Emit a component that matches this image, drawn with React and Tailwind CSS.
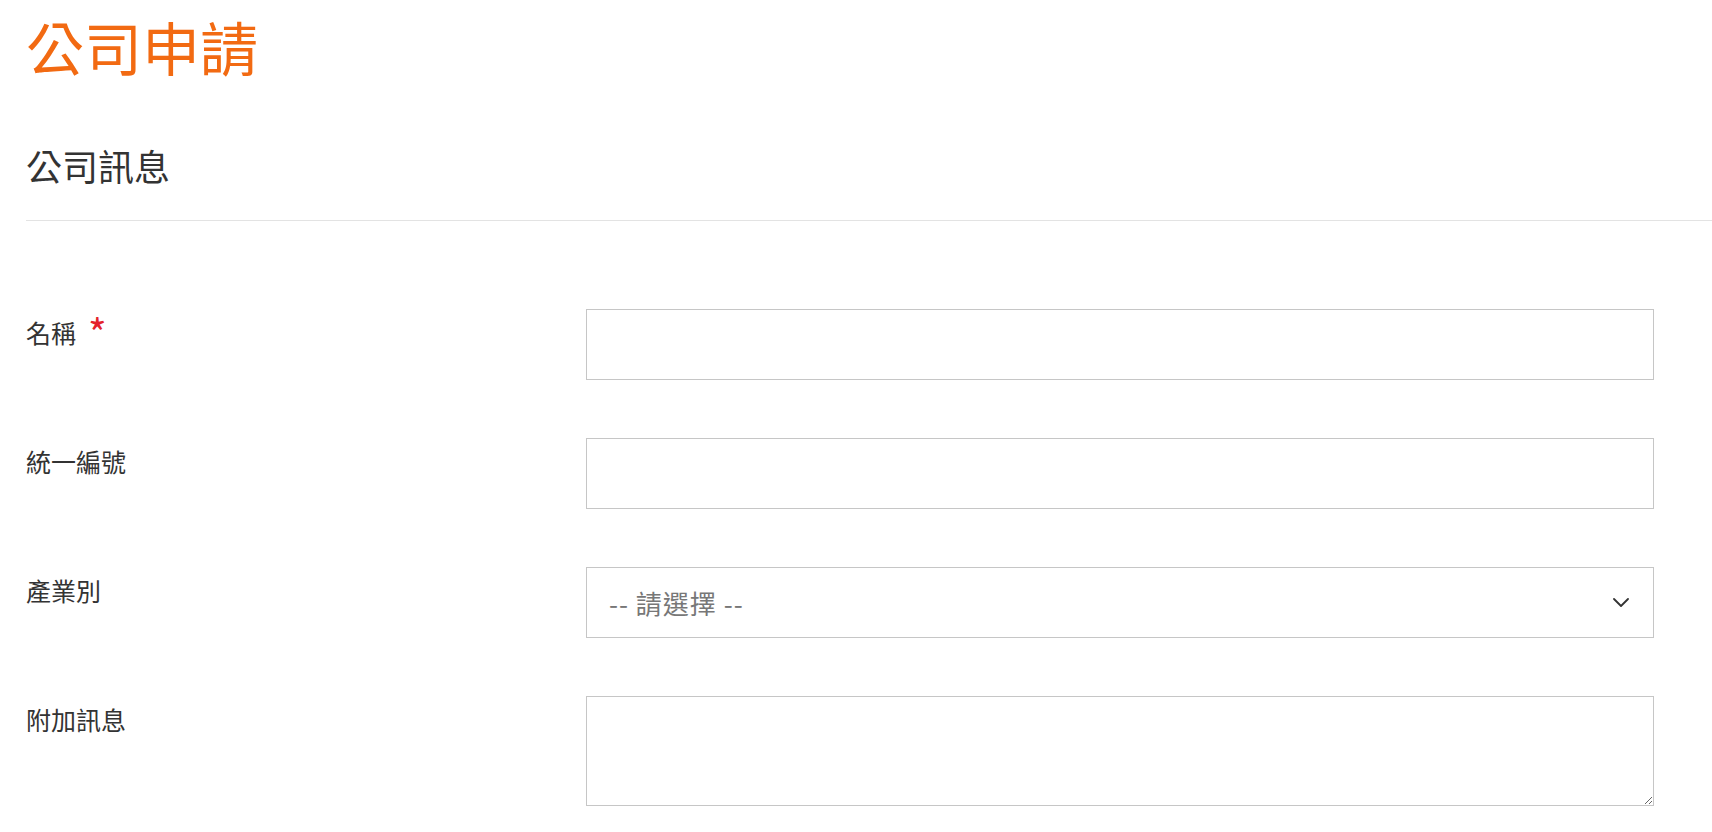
import React from 'react';

const fontStack = { fontFamily: '"Noto Sans CJK TC", "Noto Sans", sans-serif' };

const Field = ({ label, required, children }) => {
  return (
    <div className="flex items-start">
      <div className="w-[560px] shrink-0 flex items-start pt-[4px]">
        <span className="text-[25px] leading-[38px] text-[#333]">{label}</span>
        {required && (
          <span className="ml-[12px] mt-[2px] text-[40px] leading-[34px] text-[#e4232b]">*</span>
        )}
      </div>
      {children}
    </div>
  );
};

const App = () => {
  return (
    <div className="min-h-screen bg-white pl-[26px] pt-[12px] pb-10" style={fontStack}>
      <h1 className="text-[58px] leading-[1.2] text-[#f26a12] font-normal">公司申請</h1>

      <h2 className="mt-[60px] text-[36px] leading-[1.3] text-[#333] font-normal">公司訊息</h2>
      <div className="mt-[32px] border-t border-[#e3e3e3]"></div>

      <div className="mt-[88px] flex flex-col gap-[58px]">
        {/* 名稱 */}
        <Field label="名稱" required>
          <input type="text" className="w-[1068px] h-[71px] border border-[#c6c6c6] bg-white outline-none px-[22px] text-[24px]" />
        </Field>

        {/* 統一編號 */}
        <Field label="統一編號">
          <input type="text" className="w-[1068px] h-[71px] border border-[#c6c6c6] bg-white outline-none px-[22px] text-[24px]" />
        </Field>

        {/* 產業別 */}
        <Field label="產業別">
          <div className="relative w-[1068px] h-[71px]">
            <select className="appearance-none w-full h-full border border-[#c6c6c6] bg-white outline-none pl-[22px] pr-12 text-[26px] tracking-[1px] text-[#777]" defaultValue="">
              <option value="">-- 請選擇 --</option>
            </select>
            <svg className="pointer-events-none absolute right-[25px] top-[31px]" width="16" height="9" viewBox="0 0 16 9" fill="none">
              <path d="M1 1l7 7 7-7" stroke="#333" strokeWidth="1.8" strokeLinecap="round" strokeLinejoin="round" />
            </svg>
          </div>
        </Field>

        {/* 附加訊息 */}
        <Field label="附加訊息">
          <textarea className="w-[1068px] h-[110px] border border-[#c6c6c6] bg-white outline-none px-[22px] py-3 text-[24px] block"></textarea>
        </Field>
      </div>
    </div>
  );
};

export default App;
